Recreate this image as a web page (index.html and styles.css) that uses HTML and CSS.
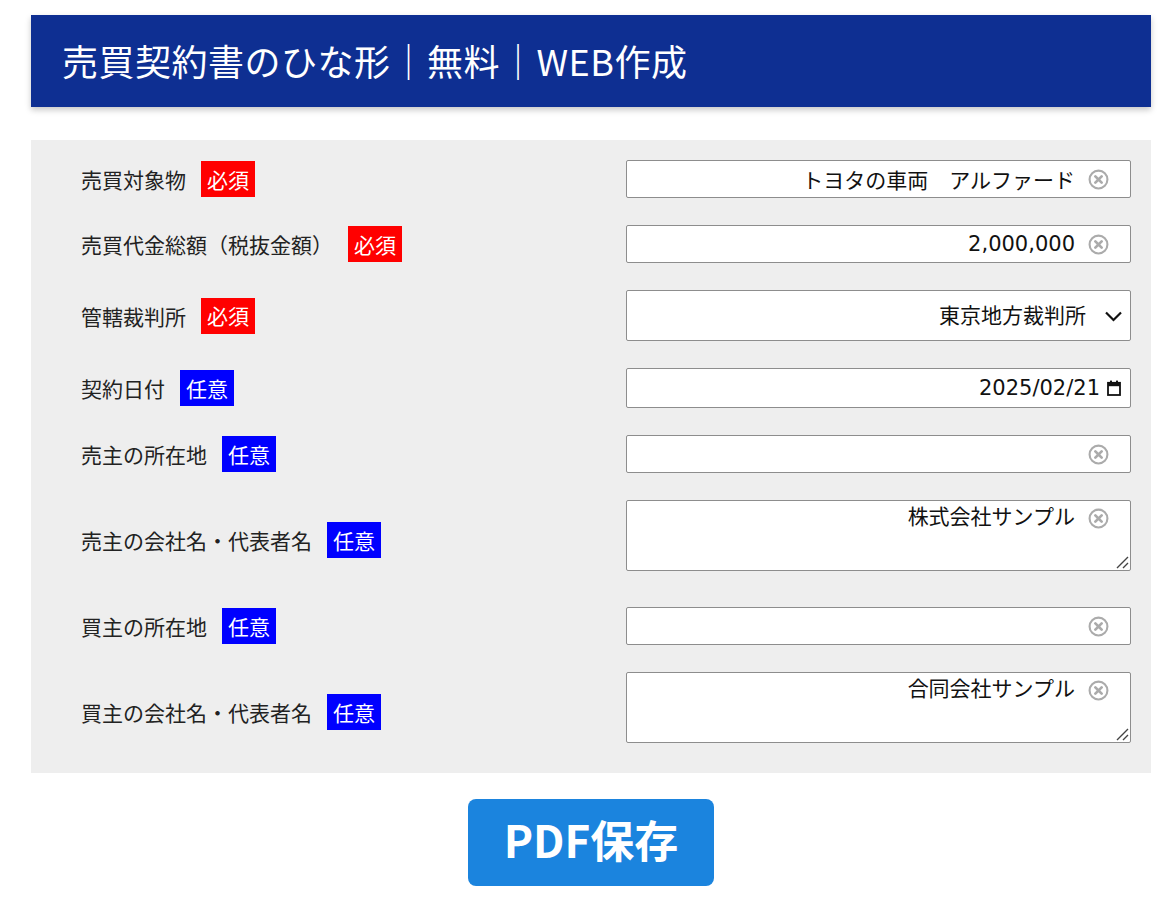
FILE: index.html
```html
<!DOCTYPE html>
<html lang="ja">
<head>
<meta charset="utf-8">
<title>売買契約書のひな形</title>
<link rel="stylesheet" href="styles.css">
</head>
<body>
<div class="page">
  <header class="site-header">
    <h1 class="site-title">売買契約書のひな形｜無料｜WEB作成</h1>
  </header>

  <form class="panel">
    <div class="row">
      <div class="label">売買対象物<span class="badge req">必須</span></div>
      <div class="field">
        <input class="control" type="text" value="トヨタの車両　アルファード">
        <svg class="clear" viewBox="0 0 20 20"><circle cx="10" cy="10" r="8.5"/><path d="M7 7 13 13M13 7 7 13"/></svg>
      </div>
    </div>

    <div class="row">
      <div class="label">売買代金総額（税抜金額）<span class="badge req">必須</span></div>
      <div class="field">
        <input class="control" type="text" value="2,000,000">
        <svg class="clear" viewBox="0 0 20 20"><circle cx="10" cy="10" r="8.5"/><path d="M7 7 13 13M13 7 7 13"/></svg>
      </div>
    </div>

    <div class="row">
      <div class="label">管轄裁判所<span class="badge req">必須</span></div>
      <div class="field">
        <select class="control select">
          <option selected>東京地方裁判所</option>
          <option>大阪地方裁判所</option>
        </select>
        <svg class="chevron" viewBox="0 0 18 11"><path d="M1.5 1.5 9 9 16.5 1.5"/></svg>
      </div>
    </div>

    <div class="row">
      <div class="label">契約日付<span class="badge opt">任意</span></div>
      <div class="field">
        <input class="control date" type="text" value="2025/02/21">
        <svg class="calendar" viewBox="0 0 14 16"><rect x="1" y="2.8" width="12" height="12.2" fill="none" stroke="#111" stroke-width="1.8"/><rect x="1" y="2.8" width="12" height="3.4" fill="#111"/><rect x="3" y="0.6" width="2" height="3" fill="#111"/><rect x="9" y="0.6" width="2" height="3" fill="#111"/></svg>
      </div>
    </div>

    <div class="row">
      <div class="label">売主の所在地<span class="badge opt">任意</span></div>
      <div class="field">
        <input class="control" type="text" value="">
        <svg class="clear" viewBox="0 0 20 20"><circle cx="10" cy="10" r="8.5"/><path d="M7 7 13 13M13 7 7 13"/></svg>
      </div>
    </div>

    <div class="row">
      <div class="label">売主の会社名・代表者名<span class="badge opt">任意</span></div>
      <div class="field area">
        <textarea class="control textarea">株式会社サンプル</textarea>
        <svg class="clear top" viewBox="0 0 20 20"><circle cx="10" cy="10" r="8.5"/><path d="M7 7 13 13M13 7 7 13"/></svg>
        <svg class="grip" viewBox="0 0 14 14"><path d="M13 2 2 13M13 8 8 13"/></svg>
      </div>
    </div>

    <div class="row">
      <div class="label">買主の所在地<span class="badge opt">任意</span></div>
      <div class="field">
        <input class="control" type="text" value="">
        <svg class="clear" viewBox="0 0 20 20"><circle cx="10" cy="10" r="8.5"/><path d="M7 7 13 13M13 7 7 13"/></svg>
      </div>
    </div>

    <div class="row">
      <div class="label">買主の会社名・代表者名<span class="badge opt">任意</span></div>
      <div class="field area">
        <textarea class="control textarea">合同会社サンプル</textarea>
        <svg class="clear top" viewBox="0 0 20 20"><circle cx="10" cy="10" r="8.5"/><path d="M7 7 13 13M13 7 7 13"/></svg>
        <svg class="grip" viewBox="0 0 14 14"><path d="M13 2 2 13M13 8 8 13"/></svg>
      </div>
    </div>
  </form>

  <div class="actions">
    <button class="pdf-button" type="button">PDF保存</button>
  </div>
</div>
</body>
</html>
```

FILE: styles.css
```css
* {
  box-sizing: border-box;
}

html, body {
  margin: 0;
  padding: 0;
  background: #ffffff;
}

body {
  font-family: "Noto Sans CJK JP", "Noto Sans", sans-serif;
  color: #1a1a1a;
}

.page {
  width: 1120px;
  margin: 15px 0 0 31px;
}

.site-header {
  background: #0e2f92;
  height: 92px;
  display: flex;
  align-items: center;
  padding-left: 31px;
  padding-bottom: 2px;
  box-shadow: 0 3px 6px rgba(0, 0, 0, 0.22);
}

.site-title {
  margin: 0;
  color: #ffffff;
  font-size: 36px;
  font-weight: 400;
  letter-spacing: 0.5px;
  line-height: 1;
}

.panel {
  margin-top: 33px;
  background: #eeeeee;
  padding: 20px 20px 21px 50px;
  display: flex;
  flex-direction: column;
  gap: 27px;
}

.row {
  display: flex;
  align-items: center;
  justify-content: space-between;
}

.label {
  display: flex;
  align-items: center;
  font-size: 21px;
  color: #222;
}

.badge {
  display: inline-flex;
  align-items: center;
  justify-content: center;
  height: 36px;
  padding: 0 6px 1px;
  margin-left: 15px;
  color: #ffffff;
  font-size: 21px;
}

.badge.req {
  background: #ff0000;
}

.badge.opt {
  background: #0000ff;
}

.field {
  position: relative;
  width: 505px;
}

.field.area {
  padding-bottom: 9px;
}

.control {
  display: block;
  width: 100%;
  height: 38px;
  margin: 0;
  border: 1px solid #8d8d8d;
  border-radius: 2px;
  background: #ffffff;
  color: #111;
  font-family: "DejaVu Sans", "Noto Sans CJK JP", sans-serif;
  font-size: 21px;
  text-align: right;
  padding: 0 55px 0 8px;
  outline: none;
}

.select {
  height: 51px;
  appearance: none;
  -webkit-appearance: none;
  text-align-last: right;
  padding-right: 44px;
}

.date {
  height: 40px;
  padding-right: 30px;
}

.textarea {
  height: 71px;
  padding: 3px 55px 4px 8px;
  line-height: 1.3;
  resize: none;
}

.clear {
  position: absolute;
  right: 22px;
  top: 50%;
  width: 21px;
  height: 21px;
  margin-top: -10.5px;
  fill: none;
  stroke: #ababab;
  stroke-width: 2;
}

.clear path {
  stroke-width: 2.6;
  stroke-linecap: round;
}

.clear.top {
  top: 8px;
  margin-top: 0;
}

.grip {
  position: absolute;
  right: 2px;
  bottom: 11px;
  width: 14px;
  height: 14px;
  fill: none;
  stroke: #444;
  stroke-width: 1.4;
  pointer-events: none;
}

.chevron {
  position: absolute;
  right: 8px;
  top: 50%;
  width: 19px;
  height: 11px;
  margin-top: -5px;
  fill: none;
  stroke: #111;
  stroke-width: 2.2;
  pointer-events: none;
}

.calendar {
  position: absolute;
  right: 10px;
  top: 50%;
  width: 14px;
  height: 16px;
  margin-top: -8px;
  pointer-events: none;
}

.actions {
  display: flex;
  justify-content: center;
  margin-top: 26px;
}

.pdf-button {
  width: 246px;
  height: 87px;
  border: none;
  border-radius: 8px;
  background: #1b84de;
  color: #ffffff;
  font-family: "Noto Sans CJK JP", "Noto Sans", sans-serif;
  font-size: 44px;
  font-weight: 700;
  padding: 0 0 8px;
  cursor: pointer;
}
```
